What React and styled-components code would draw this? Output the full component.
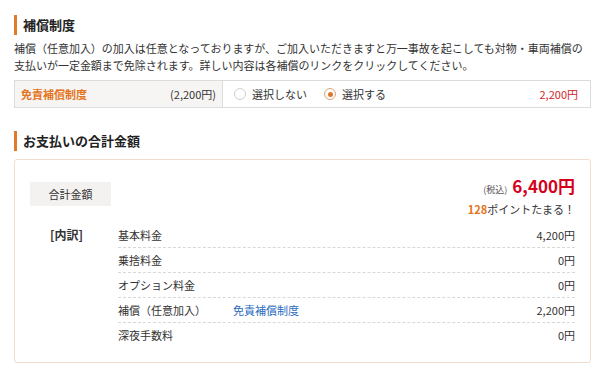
import React from "react"
import styled, { createGlobalStyle } from "styled-components"

const Global = createGlobalStyle`
  body {
    margin: 0;
    background: #fff;
    font-family: "Noto Sans CJK JP", "Noto Sans", sans-serif;
    color: #333;
  }
`

const Page = styled.div`
  width: 600px;
  height: 378px;
  box-sizing: border-box;
  padding: 15px 9px 0 14px;
  overflow: hidden;
`

const SectionTitle = styled.h2`
  margin: 0;
  height: 20px;
  border-left: 3px solid #e07b2c;
  padding-left: 6px;
  font-size: 13px;
  font-weight: bold;
  line-height: 20px;
  color: #222;
`

const Desc = styled.p`
  margin: 5px 0 0;
  font-size: 11px;
  line-height: 17px;
  letter-spacing: -0.02px;
`

const OptionRow = styled.div`
  display: flex;
  height: 26px;
  margin-top: 6px;
  border: 1px solid #dcdcdc;
  font-size: 11px;
`

const OptionLabel = styled.div`
  width: 208px;
  box-sizing: border-box;
  display: flex;
  align-items: center;
  justify-content: space-between;
  padding: 0 6px 0 6px;
  background: #f6f5f4;
  border-right: 1px solid #dcdcdc;
`

const OrangeText = styled.span`
  color: #e4741d;
  font-weight: bold;
`

const OptionChoices = styled.div`
  flex: 1;
  display: flex;
  align-items: center;
  padding: 0 12px 0 11px;
  gap: 17px;
`

const Choice = styled.label`
  display: flex;
  align-items: center;
  gap: 6px;
`

const Radio = styled.span`
  width: 10px;
  height: 10px;
  border-radius: 50%;
  border: 1px solid ${p => (p.checked ? "#d9a57e" : "#cfcfcf")};
  background: #fff;
  display: flex;
  align-items: center;
  justify-content: center;
  &::after {
    content: "";
    width: 5px;
    height: 5px;
    border-radius: 50%;
    background: ${p => (p.checked ? "#e0762a" : "transparent")};
  }
`

const OptionPrice = styled.span`
  margin-left: auto;
  color: #d2232a;
`

const Section2 = styled.div`
  margin-top: 23px;
`

const TotalBox = styled.div`
  margin-top: 8px;
  height: 204px;
  box-sizing: border-box;
  border: 1px solid #f1dccd;
  border-radius: 3px;
  padding: 21px 15px 0 15px;
`

const TopRow = styled.div`
  display: flex;
  justify-content: space-between;
  align-items: flex-start;
`

const Tag = styled.div`
  width: 81px;
  height: 24px;
  margin-top: 1px;
  background: #f3f2f1;
  font-size: 11px;
  line-height: 24px;
  text-align: center;
`

const TotalInfo = styled.div`
  display: flex;
  flex-direction: column;
  align-items: flex-end;
  margin-top: -5px;
`

const TotalLine = styled.div`
  display: flex;
  align-items: baseline;
  gap: 5px;
  height: 20px;
  line-height: 20px;
`

const Tax = styled.span`
  font-size: 9px;
  color: #555;
`

const Amount = styled.span`
  font-size: 17px;
  font-weight: bold;
  color: #d6001c;
`

const Points = styled.div`
  font-size: 11px;
  line-height: 17px;
  margin-top: 5px;
  b {
    color: #e4741d;
  }
`

const Breakdown = styled.div`
  display: flex;
  margin-top: 5px;
`

const BreakdownHead = styled.div`
  width: 88px;
  box-sizing: border-box;
  padding-left: 20px;
  font-size: 12px;
  font-weight: bold;
  line-height: 24px;
`

const Rows = styled.div`
  flex: 1;
`

const Row = styled.div`
  display: flex;
  align-items: center;
  height: 24px;
  font-size: 11px;
  border-bottom: 1px dashed #d8d8d8;
  &:last-child {
    border-bottom: none;
  }
`

const RowLabel = styled.span`
  width: 115px;
`

const Link = styled.a`
  color: #2a6bbd;
  text-decoration: none;
`

const RowValue = styled.span`
  margin-left: auto;
`

const items = [
  { label: "基本料金", value: "4,200円" },
  { label: "乗捨料金", value: "0円" },
  { label: "オプション料金", value: "0円" },
  { label: "補償（任意加入）", link: "免責補償制度", value: "2,200円" },
  { label: "深夜手数料", value: "0円" },
]

const App = () => {
  return (
    <Page>
      <Global />
      <SectionTitle>補償制度</SectionTitle>
      <Desc>
        補償（任意加入）の加入は任意となっておりますが、ご加入いただきますと万一事故を起こしても対物・車両補償の
        <br />
        支払いが一定金額まで免除されます。詳しい内容は各補償のリンクをクリックしてください。
      </Desc>
      <OptionRow>
        <OptionLabel>
          <OrangeText>免責補償制度</OrangeText>
          <span>(2,200円)</span>
        </OptionLabel>
        <OptionChoices>
          <Choice>
            <Radio />
            選択しない
          </Choice>
          <Choice>
            <Radio checked />
            選択する
          </Choice>
          <OptionPrice>2,200円</OptionPrice>
        </OptionChoices>
      </OptionRow>

      <Section2>
        <SectionTitle>お支払いの合計金額</SectionTitle>
        <TotalBox>
          <TopRow>
            <Tag>合計金額</Tag>
            <TotalInfo>
              <TotalLine>
                <Tax>(税込)</Tax>
                <Amount>6,400円</Amount>
              </TotalLine>
              <Points>
                <b>128</b>ポイントたまる！
              </Points>
            </TotalInfo>
          </TopRow>
          <Breakdown>
            <BreakdownHead>[内訳]</BreakdownHead>
            <Rows>
              {items.map(it => (
                <Row key={it.label}>
                  <RowLabel>{it.label}</RowLabel>
                  {it.link && <Link href="#">{it.link}</Link>}
                  <RowValue>{it.value}</RowValue>
                </Row>
              ))}
            </Rows>
          </Breakdown>
        </TotalBox>
      </Section2>
    </Page>
  )
}

export default App
